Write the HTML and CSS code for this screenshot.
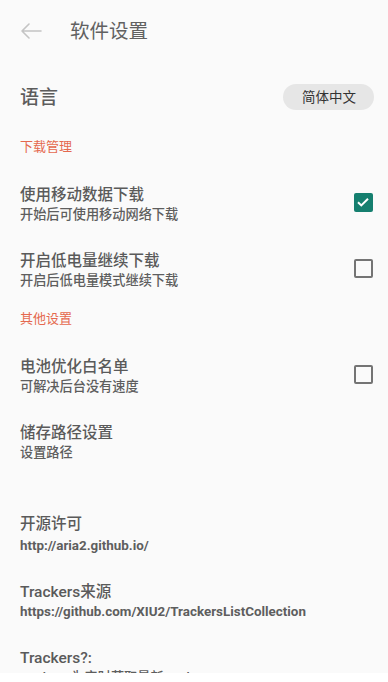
FILE: index.html
```html
<!DOCTYPE html>
<html lang="zh-CN">
<head>
  <meta charset="UTF-8" />
  <meta name="viewport" content="width=device-width, initial-scale=1" />
  <title>软件设置</title>
  <link rel="stylesheet" href="styles.css">
</head>
<body>
  <div class="screen">
    <header class="top-bar">
      <svg class="back" width="22" height="16" viewBox="0 0 22 16">
        <path d="M21 8H2M9 1L2 8l7 7" fill="none" stroke="#c4c4c4" stroke-width="1.6" stroke-linecap="round" stroke-linejoin="round"/>
      </svg>
      <h1>软件设置</h1>
    </header>

    <div class="lang-row">
      <span class="lang-label">语言</span>
      <span class="pill">简体中文</span>
    </div>

    <div class="section">下载管理</div>

    <div class="item">
      <div class="text">
        <div class="title">使用移动数据下载</div>
        <div class="sub">开始后可使用移动网络下载</div>
      </div>
      <span class="check on">
        <svg width="18" height="18" viewBox="0 0 18 18"><path d="M4 9.2l3.3 3.2L14 5.8" fill="none" stroke="#fff" stroke-width="2"/></svg>
      </span>
    </div>

    <div class="item">
      <div class="text">
        <div class="title">开启低电量继续下载</div>
        <div class="sub">开启后低电量模式继续下载</div>
      </div>
      <span class="check"></span>
    </div>

    <div class="section">其他设置</div>

    <div class="item">
      <div class="text">
        <div class="title">电池优化白名单</div>
        <div class="sub">可解决后台没有速度</div>
      </div>
      <span class="check"></span>
    </div>

    <div class="item">
      <div class="text">
        <div class="title">储存路径设置</div>
        <div class="sub">设置路径</div>
      </div>
    </div>

    <div class="spacer"></div>

    <div class="item">
      <div class="text">
        <div class="title">开源许可</div>
        <div class="sub url gap">http://aria2.github.io/</div>
      </div>
    </div>

    <div class="item">
      <div class="text">
        <div class="title">Trackers来源</div>
        <div class="sub url">https://github.com/XIU2/TrackersListCollection</div>
      </div>
    </div>

    <div class="item">
      <div class="text">
        <div class="title">Trackers?:</div>
        <div class="sub">trackers 为实时获取最新trackers</div>
      </div>
    </div>
  </div>
</body>
</html>
```

FILE: styles.css
```css
body {
  margin: 0;
  background: #fff;
  font-family: Roboto, "Noto Sans CJK SC", sans-serif;
}
.screen {
  height: 673px;
  overflow: hidden;
  background: #fafafa;
  color: #585858;
}
.top-bar {
  height: 62px;
  display: flex;
  align-items: center;
  padding: 0 20px;
}
.back {
  margin-top: -1px;
}
.top-bar h1 {
  margin: -4px 0 0 28px;
  font-size: 19.5px;
  font-weight: normal;
  color: #616161;
}
.lang-row {
  height: 70px;
  display: flex;
  align-items: center;
  justify-content: space-between;
  padding: 0 14px 0 20px;
}
.lang-label {
  margin-top: -3px;
  font-size: 19px;
  font-weight: 500;
  color: #5c5c5c;
}
.pill {
  background: #e6e6e6;
  border-radius: 13px;
  height: 26px;
  line-height: 26px;
  padding: 0 18px 0 19px;
  font-size: 13.5px;
  color: #333;
}
.section {
  padding: 5px 20px 15px;
  line-height: 20px;
  font-size: 13px;
  color: #e5694f;
}
.item {
  display: flex;
  align-items: center;
  padding: 14px 15px 14px 20px;
}
.text {
  flex: 1;
}
.title {
  font-size: 15.5px;
  line-height: 19px;
  font-weight: 500;
  color: #5a5a5a;
}
.sub {
  font-size: 13.2px;
  line-height: 19px;
  font-weight: 500;
  color: #5e5e5e;
}
.sub.url {
  font-size: 13.4px;
  font-weight: bold;
}
.sub.gap {
  margin-top: 2px;
}
.spacer {
  height: 25px;
}
.check {
  width: 15px;
  height: 15px;
  border: 2px solid #747474;
  border-radius: 2px;
  margin: 0 0 5px;
}
.check.on {
  width: 19px;
  height: 19px;
  border: none;
  background: #157f6f;
}
.check svg {
  display: block;
}
```
